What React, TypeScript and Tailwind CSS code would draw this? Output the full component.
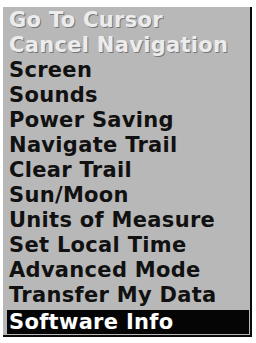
import React from 'react';

const items = [
  'Screen',
  'Sounds',
  'Power Saving',
  'Navigate Trail',
  'Clear Trail',
  'Sun/Moon',
  'Units of Measure',
  'Set Local Time',
  'Advanced Mode',
  'Transfer My Data',
];

const App: React.FC = () => {
  return (
    <div className="w-[256px] h-[343px] bg-white pt-[7px] pl-[3px] overflow-hidden">
      <div
        className="w-[249px] h-[330px] bg-[#b8b8b8] border-r-2 border-b-2 border-[#0a0a0a] pt-[1px] text-[21px] leading-[25px] font-bold tracking-[0.3px] text-[#111111]"
        style={{ fontFamily: '"DejaVu Sans", Verdana, sans-serif' }}
      >
        <div className="h-[25px] pl-[6px] text-[#ececec] [text-shadow:1px_1px_0_#777777] whitespace-nowrap">Go To Cursor</div>
        <div className="h-[25px] pl-[6px] text-[#ececec] [text-shadow:1px_1px_0_#777777] whitespace-nowrap">Cancel Navigation</div>
        {items.map((label) => (
          <div key={label} className="h-[25px] pl-[6px] whitespace-nowrap">
            {label}
          </div>
        ))}
        <div className="h-[24px] leading-[24px] ml-[4px] mr-[1px] pl-[2px] mt-[2px] bg-[#050505] text-white whitespace-nowrap">
          Software Info
        </div>
      </div>
    </div>
  );
};

export default App;
